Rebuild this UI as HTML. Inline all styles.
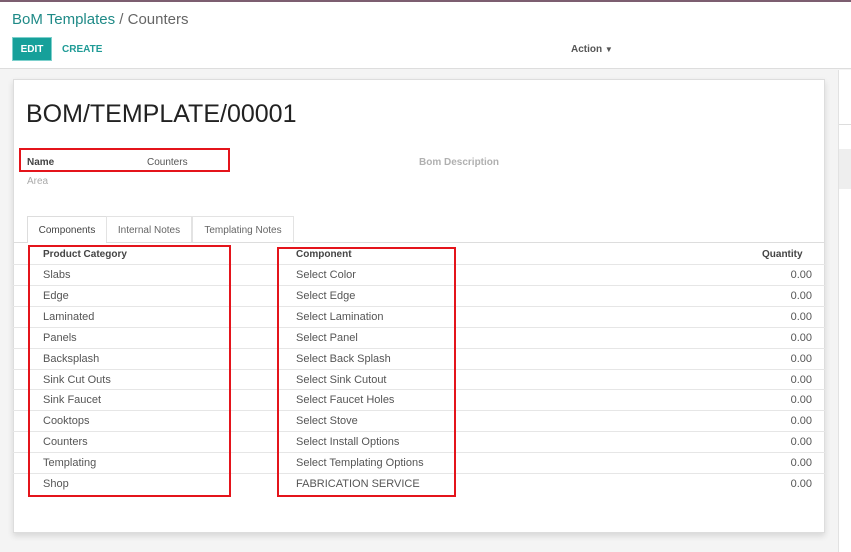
<!DOCTYPE html>
<html><head><meta charset="utf-8"><style>
*{margin:0;padding:0;box-sizing:border-box}
body{width:851px;height:552px;overflow:hidden;background:#f4f4f4;font-family:"Liberation Sans",sans-serif;position:relative;color:#4c4c4c}
.abs{position:absolute}
#top{left:0;top:0;width:851px;height:69px;background:#fff;border-top:2px solid #7c5e70;border-bottom:1px solid #ddd}
.row{position:absolute;left:13px;width:812px;height:21px;border-top:1px solid #e6e6e6;font-size:11px;line-height:21px;color:#555}
.red{position:absolute;border:2px solid #e4141b}
</style></head><body>
<div id="top" class="abs"></div>
<div class="abs" style="left:12px;top:11px;font-size:15px;color:#666"><span style="color:#1f8a87">BoM Templates</span> / Counters</div>
<div class="abs" style="left:12px;top:37px;width:40px;height:24px;background:#16a09a;border:1px solid #7dd0cc;color:#fff;font-size:10px;font-weight:bold;line-height:23px;text-align:center">EDIT</div>
<div class="abs" style="left:62px;top:44px;font-size:10px;font-weight:bold;color:#1f9b96">CREATE</div>
<div class="abs" style="left:571px;top:44px;font-size:10px;font-weight:bold;color:#555">Action <span style="font-size:8px">&#9660;</span></div>
<div class="abs" style="left:838px;top:70px;width:13px;height:482px;background:#fff;border-left:1px solid #e2e2e2"></div>
<div class="abs" style="left:839px;top:124px;width:12px;height:1px;background:#ddd"></div>
<div class="abs" style="left:839px;top:149px;width:12px;height:40px;background:#eee"></div>
<div class="abs" style="left:13px;top:79px;width:812px;height:454px;background:#fff;border:1px solid #ddd;box-shadow:0 3px 6px rgba(0,0,0,.12)"></div>
<div class="abs" style="left:26px;top:100px;font-size:25px;color:#222">BOM/TEMPLATE/00001</div>
<div class="abs" style="left:27px;top:157px;font-size:10px;font-weight:bold;color:#444">Name</div>
<div class="abs" style="left:147px;top:157px;font-size:10px;color:#555">Counters</div>
<div class="abs" style="left:27px;top:176px;font-size:10px;color:#aaa">Area</div>
<div class="abs" style="left:419px;top:157px;font-size:10px;font-weight:bold;color:#b0b0b0">Bom Description</div>
<div class="red" style="left:19px;top:148px;width:211px;height:24px"></div>
<div class="abs" style="left:13px;top:242px;width:812px;height:1px;background:#ddd"></div>
<div class="abs" style="left:27px;top:216px;width:80px;height:27px;background:#fff;border:1px solid #ddd;border-bottom:none;font-size:10px;line-height:27px;text-align:center;color:#444">Components</div>
<div class="abs" style="left:106px;top:216px;width:86px;height:26px;border:1px solid #e3e3e3;border-bottom:none;font-size:10px;line-height:27px;text-align:center;color:#666">Internal Notes</div>
<div class="abs" style="left:192px;top:216px;width:102px;height:26px;border:1px solid #e3e3e3;border-bottom:none;font-size:10px;line-height:27px;text-align:center;color:#666">Templating Notes</div>
<div class="abs" style="left:43px;top:249px;font-size:10px;font-weight:bold;color:#444">Product Category</div>
<div class="abs" style="left:296px;top:249px;font-size:10px;font-weight:bold;color:#444">Component</div>
<div class="abs" style="left:762px;top:249px;font-size:10px;font-weight:bold;color:#444">Quantity</div>
<div class="row" style="top:264px"><span class="abs" style="left:30px">Slabs</span><span class="abs" style="left:283px">Select Color</span><span class="abs" style="right:13px">0.00</span></div>
<div class="row" style="top:285px"><span class="abs" style="left:30px">Edge</span><span class="abs" style="left:283px">Select Edge</span><span class="abs" style="right:13px">0.00</span></div>
<div class="row" style="top:306px"><span class="abs" style="left:30px">Laminated</span><span class="abs" style="left:283px">Select Lamination</span><span class="abs" style="right:13px">0.00</span></div>
<div class="row" style="top:327px"><span class="abs" style="left:30px">Panels</span><span class="abs" style="left:283px">Select Panel</span><span class="abs" style="right:13px">0.00</span></div>
<div class="row" style="top:348px"><span class="abs" style="left:30px">Backsplash</span><span class="abs" style="left:283px">Select Back Splash</span><span class="abs" style="right:13px">0.00</span></div>
<div class="row" style="top:369px"><span class="abs" style="left:30px">Sink Cut Outs</span><span class="abs" style="left:283px">Select Sink Cutout</span><span class="abs" style="right:13px">0.00</span></div>
<div class="row" style="top:389px"><span class="abs" style="left:30px">Sink Faucet</span><span class="abs" style="left:283px">Select Faucet Holes</span><span class="abs" style="right:13px">0.00</span></div>
<div class="row" style="top:410px"><span class="abs" style="left:30px">Cooktops</span><span class="abs" style="left:283px">Select Stove</span><span class="abs" style="right:13px">0.00</span></div>
<div class="row" style="top:431px"><span class="abs" style="left:30px">Counters</span><span class="abs" style="left:283px">Select Install Options</span><span class="abs" style="right:13px">0.00</span></div>
<div class="row" style="top:452px"><span class="abs" style="left:30px">Templating</span><span class="abs" style="left:283px">Select Templating Options</span><span class="abs" style="right:13px">0.00</span></div>
<div class="row" style="top:473px"><span class="abs" style="left:30px">Shop</span><span class="abs" style="left:283px">FABRICATION SERVICE</span><span class="abs" style="right:13px">0.00</span></div>
<div class="red" style="left:28px;top:245px;width:203px;height:252px"></div>
<div class="red" style="left:277px;top:247px;width:179px;height:250px"></div>
</body></html>
